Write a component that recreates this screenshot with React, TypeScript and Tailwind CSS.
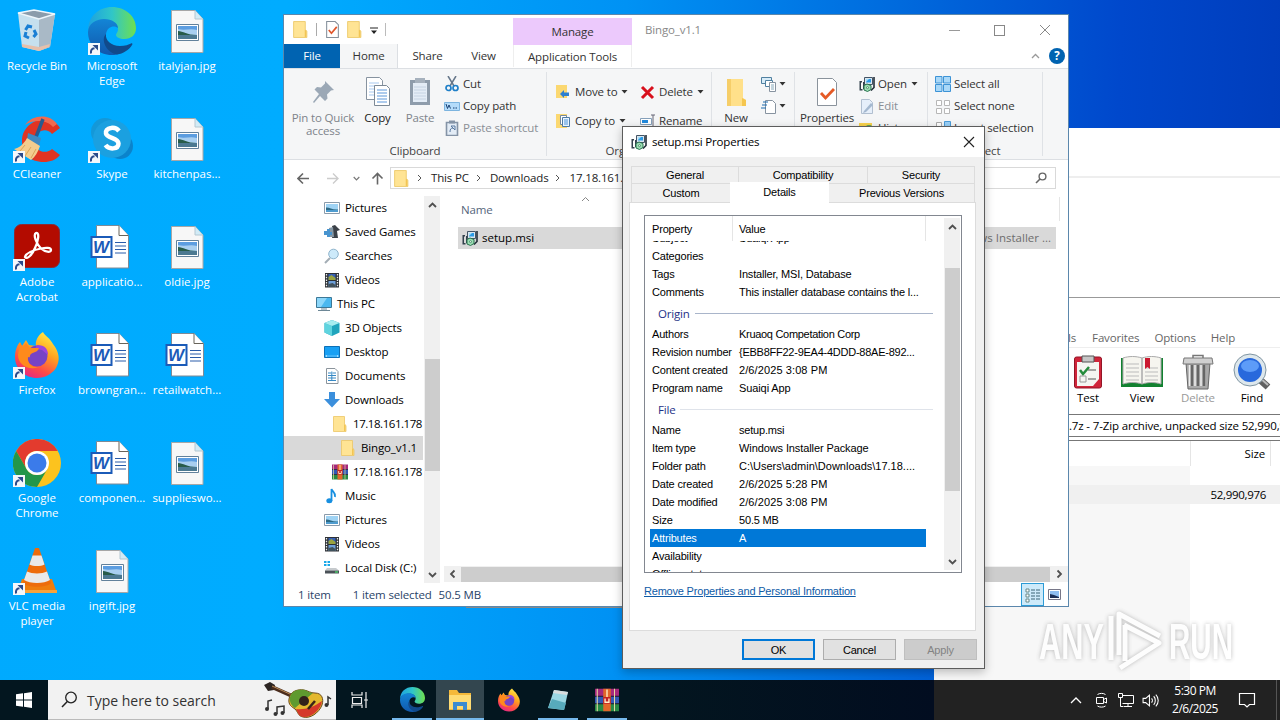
import type { ReactNode } from 'react';
import clsx from 'clsx';

type SvgProps = { size?: number; box?: string; className?: string; children: ReactNode };

function Svg({ size = 16, box = '0 0 16 16', className, children }: SvgProps) {
  return (
    <svg width={size} height={size} viewBox={box} fill="none" className={clsx('shrink-0', className)}>
      {children}
    </svg>
  );
}

/* ---------- shared icons ---------- */

const Folder = ({ size = 16 }: { size?: number }) => (
  <Svg size={size}>
    <path d="M1.500 .5h11v8l1.500 1.500v5.500H1.500z" fill="#ffe494" />
    <path d="M12 8.500h1.500v6.500h-1.500z" fill="#f3c553" />
    <path d="M1.500 .5h11v8l1.500 1v6H1.500z" stroke="#ecc766" strokeWidth=".8" />
  </Svg>
);

const Msi = () => (
  <Svg>
    <path d="M5.500 1.500h8v7h-8z" fill="#d9e6ef" stroke="#456" />
    <path d="M7 3h5v3.500H7z" fill="#2b9be6" />
    <path d="M7 3h3L7 6z" fill="#a5def9" />
    <path d="M15 1v10.500l-3 3" stroke="#222d38" strokeWidth="1.600" />
    <path d="M.5 5h2.500v1.500H2V13h1.500v1.500H.5zM4 6h1.500v7H4z" fill="#33414d" />
    <path d="M5 9.500l3-1.500 4 1.500v4L8.500 15.500 5 14z" fill="#9de0b5" stroke="#27704c" />
    <circle cx="8.500" cy="11.700" r="1" fill="#fff" stroke="#27704c" strokeWidth=".7" />
  </Svg>
);

const Picture = () => (
  <Svg>
    <path d="M.5 2.500h15v11H.5z" fill="#fff" stroke="#8a9bab" />
    <path d="M2 4h12v8H2z" fill="#9fd3f4" />
    <path d="M2 7.500c3-.5 6 2.500 12 2V12H2z" fill="#2c6a86" />
    <path d="M2 10h12v2H2z" fill="#4f9ccf" />
  </Svg>
);

const Film = () => (
  <Svg>
    <path d="M1 1h14v14.500H1z" fill="#2d3136" />
    <path d="M2.500 2v13M13.500 2v13" stroke="#eee" strokeWidth="1.300" strokeDasharray="1.500 1.200" />
    <path d="M4.500 2h7v6h-7z" fill="#3760b5" />
    <path d="M4.500 5l3-2 4 3v2h-7z" fill="#9aa33f" />
    <path d="M4.500 9h7v6h-7z" fill="#6d9fd9" />
    <path d="M4.500 12l4-1 3 2v2h-7z" fill="#40525c" />
  </Svg>
);

const Rar = ({ size = 16 }: { size?: number }) => (
  <Svg size={size}>
    <path d="M0 .5h16v5H0z" fill="#a5287c" />
    <path d="M0 5.500h16v5H0z" fill="#3159b4" />
    <path d="M0 10.500h16v5H0z" fill="#278a45" />
    <path d="M0 5.500h16M0 10.500h16" stroke="#221a33" strokeWidth=".8" />
    <path d="M1.500 .5v15M13 .5v15" stroke="#e5d9a0" strokeWidth=".7" />
    <path d="M5.500 .5h5v15h-5z" fill="#e2672a" />
    <path d="M5.500 6h5v4.500h-5z" fill="#c32124" />
    <path d="M6.700 7v2.500h2.600V7M8 1v5" stroke="#fff0c9" strokeWidth=".9" />
  </Svg>
);

const Monitor = () => (
  <Svg>
    <path d="M.5 1.500h15v10H.5z" fill="#4bb8ef" stroke="#3d7897" />
    <path d="M1 2h10L5 11H1z" fill="#8dd7fa" />
    <path d="M5 13h6M2 14.500h12" stroke="#6d8796" />
  </Svg>
);

const sideIcons: Record<string, ReactNode> = {
  picture: <Picture />,
  film: <Film />,
  pc: <Monitor />,
  folder: <Folder />,
  rar: <Rar />,
  games: (
    <Svg>
      <path d="M8 2l3-1 3 3 2 2-3 1 1 7H8l1-5z" fill="#3b4148" />
      <path d="M5 4l4-1 1 10H5z" fill="#8797a3" />
      <path d="M0 7h3V5h3v3h2v3H6v2H3v-2H0z" fill="#4894cf" />
    </Svg>
  ),
  search: (
    <Svg>
      <path d="M6 10l-5 5" stroke="#a3adb5" strokeWidth="2" />
      <circle cx="9.500" cy="6" r="4.800" fill="#cdeafa" stroke="#8fb4cc" />
    </Svg>
  ),
  cube: (
    <Svg>
      <path d="M8 0l7.500 3v9.500L8 16 .5 12.500V3z" fill="#20a5bd" />
      <path d="M8 6v10L.5 12.500V3z" fill="#5fd4df" />
      <path d="M8 0l7.500 3L8 6 .5 3z" fill="#a7edf0" />
    </Svg>
  ),
  desktop: (
    <Svg>
      <path d="M.5 2.500h15v11H.5z" fill="#18a0f4" stroke="#0c70b7" />
      <path d="M1 12h14" stroke="#64c6ff" />
      <path d="M2 12h1M13 12h1" stroke="#fff" />
    </Svg>
  ),
  doc: (
    <Svg>
      <path d="M2.500.5H11l3 3v12H2.500z" fill="#fff" stroke="#8b949c" />
      <path d="M4 5h3M4 7.500h8M4 10h8M4 12.500h8M8.500 5H12" stroke="#3689c5" />
      <path d="M7.800 3.500v9" stroke="#3689c5" />
    </Svg>
  ),
  down: (
    <Svg>
      <path d="M5 0h6v7h5l-8 8.500L0 7h5z" fill="#3b8fdc" />
    </Svg>
  ),
  music: (
    <Svg>
      <path d="M7.500 13V1c1 3 4.500 3.500 3.500 8" stroke="#178fe0" strokeWidth="1.800" />
      <ellipse cx="5.300" cy="12.800" rx="3" ry="2.500" fill="#178fe0" />
    </Svg>
  ),
  disk: (
    <Svg>
      <path d="M0 1h2.500v2H0zM3.500 1H6v2H3.500zM0 4h2.500v2H0zM3.500 4H6v2H3.500z" fill="#18a7e8" />
      <path d="M3 8h9l3 2.500H1z" fill="#c6cacd" />
      <path d="M1 10.500h14v3H1z" fill="#4b5258" />
      <path d="M11 12h3" stroke="#4be36d" strokeWidth="1.200" />
    </Svg>
  ),
};

/* ---------- desktop icons ---------- */

const Shortcut = () => (
  <Svg size={12} box="0 0 12 12" className="absolute bottom-0 left-0">
    <path d="M0 0h12v12H0z" fill="#f4f7fb" />
    <path d="M3 10.500C2.500 7 4 5.500 6.500 5.200" stroke="#2b4a8b" strokeWidth="2" />
    <path d="M4.500 2H10v5.500z" fill="#2b4a8b" />
  </Svg>
);

const EdgeLogo = ({ size = 48 }: { size?: number }) => (
  <Svg size={size} box="0 0 48 48">
    <defs>
      <linearGradient id="edgeTop" x1="0" y1=".5" x2="1" y2=".5">
        <stop offset="0" stopColor="#1da1e0" />
        <stop offset=".5" stopColor="#30c6c8" />
        <stop offset="1" stopColor="#6fe04e" />
      </linearGradient>
      <linearGradient id="edgeLow" x1="0" y1="0" x2="0" y2="1">
        <stop offset="0" stopColor="#1385d6" />
        <stop offset="1" stopColor="#1158ac" />
      </linearGradient>
    </defs>
    <path d="M0 24C0 9 11 0 24 0s24 9 24 21c0 7-5 11-11.500 11-5 0-8.500-2-8.500-4 0-1.500 2-2.500 2-6 0-5-5-9-12-9C8 13 1 18 0 24z" fill="url(#edgeTop)" />
    <path d="M0 25c0-8 8-13 16-13 8 0 14 4 14 9-3-3-11-2-12 6-1 9 6 20 15 19-3 1.500-6 2-9 2C10 48 0 38 0 25z" fill="url(#edgeLow)" />
    <path d="M18 27c-1 6 5 12 14 12 5 0 9-1.500 11-2.500 1-.5 1.800.3 1.200 1.300C41 43 35 47 29 47.500 19 46 12 33 18 27z" fill="#114a8b" />
  </Svg>
);

const FirefoxLogo = ({ size = 48 }: { size?: number }) => (
  <Svg size={size} box="0 0 48 48">
    <defs>
      <linearGradient id="fox" x1=".8" y1="0" x2=".3" y2="1">
        <stop offset="0" stopColor="#fff04a" />
        <stop offset=".4" stopColor="#ffa51f" />
        <stop offset=".75" stopColor="#ff4a47" />
        <stop offset="1" stopColor="#e42886" />
      </linearGradient>
    </defs>
    <path d="M30 1c2 4 7 6 10 12 7 9 7 17 3 24-4 6-11 10-19 10C12 47 2 38 2 26c0-6 2-12 5-15l2 4 4-6 3 5 7 1c-1-5 2-11 7-14z" fill="url(#fox)" />
    <circle cx="24" cy="25" r="10.500" fill="#7743c5" />
    <path d="M24 14c8 0 11 4 11 10l-6-5-7-1z" fill="#9c45dc" />
    <path d="M7 12l3 4 3-4 4 5 9 0c-1 4-5 4-8 6-2 2 0 4-3 3-1 7 5 11 11 10C16 40 5 34 5 24z" fill="#ff8a1c" />
  </Svg>
);

const ImageFile = () => (
  <Svg size={48} box="0 0 48 48">
    <path d="M8.500 3.500H32l8 8.500v33.500H8.500z" fill="#f7f7f7" stroke="#a7a7a7" />
    <path d="M32 3.500V12h8" fill="#d2ebf6" stroke="#b4c7d1" />
    <path d="M13.500 17.500h22v16h-22z" fill="#fff" stroke="#62819b" />
    <path d="M15 19h19v13H15z" fill="#a9cff0" />
    <path d="M15 19h19v4c-7-2-12 1-19-1z" fill="#5c9de0" />
    <path d="M15 24c5 0 9 4 19 4v1H15z" fill="#285c4a" />
    <path d="M15 28h19v4H15z" fill="#4c7991" />
  </Svg>
);

const WordFile = () => (
  <Svg size={48} box="0 0 48 48">
    <path d="M8.500 2.500H31l9.500 10v32.500h-32z" fill="#fff" stroke="#7e8a96" />
    <path d="M31 2.500V12.500h9.500" fill="#fff" stroke="#68645a" />
    <path d="M27 19.500h11M27 23h11M27 26.500h11M27 30h11" stroke="#2a5caa" />
    <path d="M3.500 14h20v20h-20z" fill="#fff" stroke="#1b5bb8" strokeWidth="2" />
    <text x="5" y="30" fill="#1b5bb8" fontFamily="'Liberation Sans', sans-serif" fontSize="17" fontWeight="700" fontStyle="italic">
      W
    </text>
  </Svg>
);

const deskIcons: Record<string, ReactNode> = {
  image: <ImageFile />,
  word: <WordFile />,
  edge: <EdgeLogo />,
  firefox: <FirefoxLogo />,
  bin: (
    <Svg size={48} box="0 0 48 48">
      <path d="M5 6l16-3 21 4-5 33-11 4-17-4z" fill="#dbe5ec" fillOpacity=".9" />
      <path d="M26 12l16-5-5 33-11 4z" fill="#a9b9c6" />
      <path d="M5 6l16-3 21 4-16 5z" fill="#8b9cab" stroke="#eef6fb" strokeWidth="1.500" />
      <path d="M9 37l17 3 11-3-1 3-10 4-17-4z" fill="#e6c0ab" />
      <path d="M12.500 23l2.500-4 4 1M21 23l2 4-2.500 3M16 31l-4-2 1-4" stroke="#1a7fd4" strokeWidth="3" />
    </Svg>
  ),
  ccleaner: (
    <Svg size={48} box="0 0 48 48">
      <path d="M47 13l-8 6c-5-7-17-4-17 7 0 12 12 13 17 8l8 6c-4 5-10 7-16 7C16 47 9 38 9 26 9 6 36-4 47 13z" fill="#e03423" />
      <path d="M12 10c8-11 25-11 32-1l-4 3C33 4 20 5 12 10z" fill="#f06a50" />
      <path d="M30 4L23 22" stroke="#285b8f" strokeWidth="3.500" />
      <path d="M15 18l13 5-2 8-12-6z" fill="#3f8ac2" />
      <path d="M14 23l13 8c-2 6-5 11-9 14L1 34c5-1 10-5 13-11z" fill="#f3cc8e" />
      <path d="M12 30l-5 6M18 32l-6 9M23 34l-5 9" stroke="#d9a45b" />
    </Svg>
  ),
  skype: (
    <Svg size={48} box="0 0 48 48">
      <circle cx="17" cy="17" r="14" fill="#1498d8" />
      <circle cx="32" cy="31" r="13" fill="#0b83cb" />
      <circle cx="24" cy="24" r="19" fill="#1ba0e0" />
      <path d="M31 16c-2-2.500-5-3.500-8-3-4 .5-5.500 3-5 5.500 1 5 12 4 12.500 10 0 6-9.500 6.500-13 1.500" stroke="#fff" strokeWidth="4.500" />
    </Svg>
  ),
  acrobat: (
    <Svg size={48} box="0 0 48 48">
      <rect x="1.500" y="1.500" width="45" height="43" rx="7" fill="#b30b00" stroke="#8b2a35" />
      <path d="M12 34c1-4 9-7 16-8.500 5-1 10-1 10 1.500 0 3-6 2-10-1.500-5-5-8-14-5-15.500 4-1 2 9-1 15-3 7-8 12-10 9z" stroke="#fff" strokeWidth="2.300" />
    </Svg>
  ),
  chrome: (
    <Svg size={48} box="0 0 48 48">
      <circle cx="24" cy="24" r="24" fill="#fcc31e" />
      <path d="M3.200 12a24 24 0 0 1 41.600 0H24a12 12 0 0 0-10.400 18z" fill="#e33b2e" />
      <path d="M3.200 12l10.400 18A12 12 0 0 0 34.400 30L24 48A24 24 0 0 1 3.200 12z" fill="#23964a" />
      <circle cx="24" cy="24" r="12" fill="#fff" />
      <circle cx="24" cy="24" r="9.500" fill="#3b7bea" />
    </Svg>
  ),
  vlc: (
    <Svg size={48} box="0 0 48 48">
      <path d="M9 32h30l5 14H4z" fill="#ef7d0d" />
      <path d="M5 43h39v3H4z" fill="#f9a33b" />
      <path d="M22 1h4l12 35c-4 5-24 5-28 0z" fill="#ed6c0b" />
      <path d="M19.500 8.500h9l3 9c-4 2-11 2-15 0zM14 24.500c5 2.500 15 2.500 20 0l3 8.500c-6 4-20 4-26 0z" fill="#e9e9e9" />
    </Svg>
  ),
};

const desktopItems = [
  { label: ['Recycle Bin'], icon: 'bin' },
  { label: ['CCleaner'], icon: 'ccleaner', shortcut: true },
  { label: ['Adobe', 'Acrobat'], icon: 'acrobat', shortcut: true },
  { label: ['Firefox'], icon: 'firefox', shortcut: true },
  { label: ['Google', 'Chrome'], icon: 'chrome', shortcut: true },
  { label: ['VLC media', 'player'], icon: 'vlc', shortcut: true },
  { label: ['Microsoft', 'Edge'], icon: 'edge', shortcut: true },
  { label: ['Skype'], icon: 'skype', shortcut: true },
  { label: ['applicatio...'], icon: 'word' },
  { label: ['browngran...'], icon: 'word' },
  { label: ['componen...'], icon: 'word' },
  { label: ['ingift.jpg'], icon: 'image' },
  { label: ['italyjan.jpg'], icon: 'image' },
  { label: ['kitchenpas...'], icon: 'image' },
  { label: ['oldie.jpg'], icon: 'image' },
  { label: ['retailwatch...'], icon: 'word' },
  { label: ['supplieswo...'], icon: 'image' },
];

function Desktop() {
  return (
    <div className="absolute top-[7px] left-0 grid w-[225px] grid-flow-col grid-cols-3 grid-rows-[repeat(6,108px)]">
      {desktopItems.map((item) => (
        <div key={item.label[0]} className="flex flex-col items-center pr-px">
          <div className="relative size-12">
            {deskIcons[item.icon]}
            {item.shortcut && <Shortcut />}
          </div>
          <div className="mt-[3px] text-center leading-[15px] tracking-[0px] whitespace-nowrap text-white">
            {item.label.map((line) => (
              <div key={line}>{line}</div>
            ))}
          </div>
        </div>
      ))}
    </div>
  );
}

/* ---------- archive window ---------- */

const archiveTools = [
  {
    label: 'Test',
    width: '-ml-[7px] w-[54px] text-black',
    icon: (
      <Svg size={36} box="0 0 36 36">
        <rect x="4.500" y="3" width="27" height="31" rx="2" fill="#d0253a" stroke="#931526" />
        <path d="M7 8h22v17l-6 7H7z" fill="#f5f5f2" />
        <path d="M12 2h12v6H12z" fill="#c6c6c6" stroke="#555" />
        <path d="M10 16l3 4 6-7" stroke="#258c3c" strokeWidth="2.500" />
        <path d="M18 16h8M18 25h8" stroke="#555" />
        <path d="M10 22h6v6h-6z" stroke="#999" />
      </Svg>
    ),
  },
  {
    label: 'View',
    width: 'w-[54px] text-black',
    icon: (
      <Svg size={44} box="0 0 44 36">
        <path d="M1 4h42v29H1z" fill="#128130" />
        <path d="M3 4c6-2 13-2 19 0v26c-6-2-13-2-19 0zM22 4c6-2 13-2 19 0v26c-6-2-13-2-19 0z" fill="#f6f5ef" stroke="#aaa" />
        <path d="M6 10h13M6 14h13M6 18h13M6 22h13M6 26h13M25 14h13M25 18h13M25 22h13M25 26h13" stroke="#bbb" />
        <path d="M25 4h5v11l-2.500-2-2.500 2z" fill="#cb1930" />
      </Svg>
    ),
  },
  {
    label: 'Delete',
    width: 'w-[58px] text-[#999]',
    icon: (
      <Svg size={36} box="0 0 36 36">
        <path d="M6 9h24l-2 26H8z" fill="#a9a9a9" stroke="#666" />
        <path d="M12 11v21M18 11v21M24 11v21" stroke="#666" strokeWidth="2.300" />
        <path d="M9.500 11v21M15 11v21M21 11v21" stroke="#eee" strokeWidth="1.500" />
        <path d="M4 4h28l1 6H3z" fill="#d0d0d0" stroke="#777" />
        <path d="M13 4V1.500h10V4" stroke="#777" strokeWidth="1.500" />
      </Svg>
    ),
  },
  {
    label: 'Find',
    width: 'w-[50px] text-black',
    icon: (
      <Svg size={38} box="0 0 38 38">
        <path d="M25 25l10 9" stroke="#616161" strokeWidth="7" />
        <path d="M26 24l9 8" stroke="#bcbcbc" strokeWidth="2" />
        <circle cx="17" cy="17" r="14" fill="#2869dc" stroke="#dde7ec" strokeWidth="4" />
        <circle cx="17" cy="17" r="16" stroke="#8095a2" />
        <ellipse cx="17" cy="13" rx="9" ry="6" fill="#5d9cf8" />
      </Svg>
    ),
  },
];

function ArchiveWindow() {
  return (
    <section className="absolute top-[297px] left-[934px] flex h-[383px] w-[346px] flex-col overflow-hidden border-t border-[#999] bg-white pl-[134px]">
      <nav className="mt-[32px] flex h-[17px] gap-[15px] leading-[16px] text-[#666]">
        <span className="pr-px">ls</span>
        <span>Favorites</span>
        <span>Options</span>
        <span>Help</span>
      </nav>
      <div className="flex h-[67px] border-t border-[#eee] pt-[6px]">
        {archiveTools.map((tool) => (
          <div key={tool.label} className={clsx('flex shrink-0 flex-col items-center', tool.width)}>
            <div className="flex h-9 w-[44px] items-center justify-center">{tool.icon}</div>
            <span className="leading-[16px]">{tool.label}</span>
          </div>
        ))}
      </div>
      <div className="h-[23px] border-y border-[#777] pl-px leading-[22px] whitespace-nowrap text-black">
        .7z - 7-Zip archive, unpacked size 52,990,976 bytes
      </div>
      <div className="mt-[3px] flex h-[26px] shrink-0 border-t border-[#777] leading-[26px]">
        <div className="w-[123px] border-r border-[#e5e5e5]" />
        <div className="w-[80px] border-r border-[#e5e5e5] pr-[5px] text-right text-black">Size</div>
      </div>
      <div className="-ml-[134px] flex flex-1 flex-col bg-white bg-[linear-gradient(90deg,#f7f7f7_256px,#fff_256px)]">
        <div className="mt-[19px] flex h-[19px] justify-end bg-[#f0f0f0] pr-[14px] leading-[20px] tracking-[-0.3px] text-black">52,990,976</div>
      </div>
    </section>
  );
}

/* ---------- explorer window ---------- */

const Caret = () => (
  <svg width="7" height="4" viewBox="0 0 7 4" className="ml-px shrink-0">
    <path d="M.5 0h6L3.500 3.500z" fill="#333" />
  </svg>
);

function SmallButton({ icon, label, caret, muted }: { icon: ReactNode; label: string; caret?: boolean; muted?: boolean }) {
  return (
    <div className={clsx('flex h-[22px] items-center gap-[3px] whitespace-nowrap', muted ? 'text-[#8a8f96]' : 'text-[#333]')}>
      {icon}
      <span>{label}</span>
      {caret && <Caret />}
    </div>
  );
}

function RibbonGroup({ className, label, children }: { className: string; label: string; children: ReactNode }) {
  return (
    <div className={clsx('my-[3px] flex shrink-0 flex-col border-r border-[#dfe2e6]', className)}>
      <div className="flex h-[71px] shrink-0 pt-px">{children}</div>
      <div className="text-center leading-[15px] text-[#444]">{label}</div>
    </div>
  );
}

function Ribbon() {
  return (
    <div className="flex h-[92px] shrink-0 border-y border-[#dcdfe3] bg-[#f5f6f7]">
      <RibbonGroup className="w-[263px]" label="Clipboard">
        <div className="ml-[6px] flex w-[66px] flex-col items-center text-center leading-[13px] text-[#7e848b]">
          <Svg size={32} box="0 0 32 32" className="mt-[3px]">
            <path d="M18 5l9 9-3 .5-4 4 .5 4-2.500 2.500L13 20l-6 7-1-1 6-8-4.500-4.500 2.500-2.500 4 .5 4-4z" fill="#9ba8b6" />
          </Svg>
          <span className="mt-[3px] whitespace-nowrap">
            Pin to Quick
            <br />
            access
          </span>
        </div>
        <div className="flex w-[43px] flex-col items-center text-[#222]">
          <Svg size={32} box="0 0 32 32" className="mt-[3px]">
            <path d="M4.500 1.500h13l3 3v19h-16z" fill="#fff" stroke="#8793a0" />
            <path d="M7 7h10M7 10h10M7 13h10M7 16h10M7 19h10" stroke="#a7c8ef" />
            <path d="M12.500 9.500h12l3 3v17h-15z" fill="#fff" stroke="#7c8996" />
            <path d="M15 14h10M15 17h10M15 20h10M15 23h10M15 26h10" stroke="#5c97da" />
          </Svg>
          <span className="mt-px leading-[17px]">Copy</span>
        </div>
        <div className="flex w-[42px] flex-col items-center text-[#7e848b]">
          <Svg size={32} box="0 0 32 32" className="mt-[3px]">
            <path d="M6 4h20v25H6z" fill="#8e9cab" />
            <path d="M9 7h14v19H9z" fill="#e3ecf6" />
            <path d="M11 2h10v5H11z" fill="#a6b1bd" />
            <path d="M10 11h12M10 14h12M10 17h12M10 20h12M10 23h12" stroke="#c4d2e2" />
          </Svg>
          <span className="mt-px leading-[17px]">Paste</span>
        </div>
        <div className="ml-[3px] flex flex-col">
          <SmallButton
            label="Cut"
            icon={
              <Svg>
                <path d="M4 0l6 10M12 0L6 10" stroke="#66778a" strokeWidth="1.500" />
                <circle cx="4.500" cy="12" r="2.500" stroke="#1f7fc8" strokeWidth="1.700" />
                <circle cx="11.500" cy="12" r="2.500" stroke="#1f7fc8" strokeWidth="1.700" />
              </Svg>
            }
          />
          <SmallButton
            label="Copy path"
            icon={
              <Svg>
                <path d="M.5 4.500h15v8H.5z" fill="#b5dcfa" stroke="#7cb4df" />
                <path d="M2 6l1.500 4.500L5 7l1.500 3.500M9 10h1.500M11.500 10H13" stroke="#173f73" />
              </Svg>
            }
          />
          <SmallButton
            muted
            label="Paste shortcut"
            icon={
              <Svg>
                <path d="M2.500 2.500h11v13h-11z" fill="#e3ecf6" stroke="#8493a6" strokeWidth="1.600" />
                <path d="M5 .5h6v3H5z" fill="#8493a6" />
                <path d="M6 12c0-3 1-4 3-4M7 6h4v4z" stroke="#5878a0" />
              </Svg>
            }
          />
        </div>
      </RibbonGroup>

      <RibbonGroup className="w-[165px]" label="Organize">
        <div className="ml-[9px] flex w-[84px] flex-col gap-[7px] pt-[8px]">
          <SmallButton
            caret
            label="Move to"
            icon={
              <Svg>
                <path d="M0 1h11v13H0z" fill="#fbd871" />
                <path d="M4 10l4-4v2.500h5V12H8v2z" fill="#2c7fd0" />
              </Svg>
            }
          />
          <SmallButton
            caret
            label="Copy to"
            icon={
              <Svg>
                <path d="M0 1h11v14H0z" fill="#fbd871" />
                <path d="M4.500 2.500h6v9h-6z" fill="#fff" stroke="#74889b" />
                <path d="M6.500 4.500h7v9h-7z" fill="#e8f3ff" stroke="#4d7ba6" />
                <path d="M8 7h4M8 9h4M8 11h4" stroke="#4d94d9" />
              </Svg>
            }
          />
        </div>
        <div className="flex flex-col gap-[7px] pt-[8px]">
          <SmallButton
            caret
            label="Delete"
            icon={
              <Svg>
                <path d="M2 3l11 11M13 3L2 14" stroke="#d8101c" strokeWidth="3" />
              </Svg>
            }
          />
          <SmallButton
            label="Rename"
            icon={
              <Svg>
                <path d="M.5 5.500h11v6H.5z" fill="#fff" stroke="#85a0ba" />
                <path d="M2 7h6v3H2z" fill="#2289dc" />
                <path d="M11 2h4M13 2v12M11 14h4" stroke="#667" />
              </Svg>
            }
          />
        </div>
      </RibbonGroup>

      <RibbonGroup className="w-[83px]" label="New">
        <div className="ml-[3px] flex w-[42px] flex-col items-center leading-[15px] text-[#333]">
          <div className="mt-[4px]">
            <Svg size={32} box="0 0 32 32">
              <path d="M7 2h16v19l3 2v6H7z" fill="#ffe08a" />
              <path d="M7 2h4v27H7z" fill="#f6ce69" />
              <path d="M22 21l4 2v6h-4z" fill="#f5c64f" />
            </Svg>
          </div>
          <span className="mt-px">New</span>
        </div>
        <div className="ml-[4px] flex flex-col">
          <div className="flex h-[22px] items-center gap-px">
            <Svg>
              <path d="M.5 1.500h10v6H.5z" fill="#d8ecf8" stroke="#5080a0" />
              <path d="M4.500 4.500h7v6h-7z" fill="#fff" stroke="#5080a0" />
              <path d="M8.500 6.500h6v9h-6z" fill="#fff" stroke="#8793a0" />
              <path d="M10 9h3M10 11h3M10 13h3" stroke="#8ab" />
            </Svg>
            <Caret />
          </div>
          <div className="flex h-[22px] items-center gap-px">
            <Svg>
              <path d="M4.500 2.500h7l3 3v10h-10z" fill="#fff" stroke="#8793a0" />
              <path d="M2 4h5M1 7h5M0 10h5" stroke="#1f6cb0" strokeWidth="1.200" />
            </Svg>
            <Caret />
          </div>
        </div>
      </RibbonGroup>

      <RibbonGroup className="w-[133px]" label="Open">
        <div className="ml-[4px] flex w-[56px] flex-col items-center text-[#333]">
          <Svg size={32} box="0 0 32 32" className="mt-[3px]">
            <path d="M6.500 2.500h15l4 4v23h-19z" fill="#fff" stroke="#8a939c" />
            <path d="M10 17l4.500 5 8.500-9" stroke="#e55a26" strokeWidth="2.800" />
          </Svg>
          <span className="mt-px leading-[17px]">Properties</span>
        </div>
        <div className="ml-[4px] flex flex-col">
          <SmallButton caret label="Open" icon={<Msi />} />
          <SmallButton
            muted
            label="Edit"
            icon={
              <Svg>
                <path d="M2.500 1.500h8l3 3v11h-11z" fill="#e6effa" stroke="#b1bfd0" />
                <path d="M5 13l7-8 2 2-7 7-3 1z" fill="#a5b9d0" />
              </Svg>
            }
          />
          <SmallButton
            label="History"
            icon={
              <Svg>
                <path d="M0 3h13v12H0z" fill="#f8d24c" />
                <circle cx="10" cy="10" r="5" fill="#53a95a" />
              </Svg>
            }
          />
        </div>
      </RibbonGroup>

      <RibbonGroup className="w-[115px]" label="Select">
        <div className="ml-[7px] flex flex-col">
          <SmallButton
            label="Select all"
            icon={
              <Svg>
                <path d="M.5.5h6.500v6.500h-6.500zM8.500.5h7v6.500h-7zM.5 8.500h6.500v7h-6.500zM8.500 8.500h7v7h-7z" fill="#a9d8f8" stroke="#3c93d6" />
              </Svg>
            }
          />
          <SmallButton
            label="Select none"
            icon={
              <Svg>
                <path d="M1.500 2.500h5v5h-5zM9.500 2.500h5v5h-5zM1.500 10.500h5v5h-5zM9.500 10.500h5v5h-5z" fill="#fff" stroke="#b7b7b7" />
              </Svg>
            }
          />
          <SmallButton
            label="Invert selection"
            icon={
              <Svg>
                <path d="M1.500 2.500h5v5h-5z" fill="#fff" stroke="#aaa" />
                <path d="M9.500 1.500h6v6h-6zM1.500 9.500h6v6h-6z" fill="#99d0f8" stroke="#4a9bd8" />
              </Svg>
            }
          />
        </div>
      </RibbonGroup>
    </div>
  );
}

const tree = [
  { label: 'Pictures', icon: 'picture', pad: 'pl-[40px]' },
  { label: 'Saved Games', icon: 'games', pad: 'pl-[40px]' },
  { label: 'Searches', icon: 'search', pad: 'pl-[40px]' },
  { label: 'Videos', icon: 'film', pad: 'pl-[40px]' },
  { label: 'This PC', icon: 'pc', pad: 'pl-[32px]' },
  { label: '3D Objects', icon: 'cube', pad: 'pl-[40px]' },
  { label: 'Desktop', icon: 'desktop', pad: 'pl-[40px]' },
  { label: 'Documents', icon: 'doc', pad: 'pl-[40px]' },
  { label: 'Downloads', icon: 'down', pad: 'pl-[40px]' },
  { label: '17.18.161.178', icon: 'folder', pad: 'pl-[48px] tracking-[-0.45px]' },
  { label: 'Bingo_v1.1', icon: 'folder', pad: 'pl-[56px]', active: true },
  { label: '17.18.161.178', icon: 'rar', pad: 'pl-[48px] tracking-[-0.45px]' },
  { label: 'Music', icon: 'music', pad: 'pl-[40px]' },
  { label: 'Pictures', icon: 'picture', pad: 'pl-[40px]' },
  { label: 'Videos', icon: 'film', pad: 'pl-[40px]' },
  { label: 'Local Disk (C:)', icon: 'disk', pad: 'pl-[40px]' },
];

type Direction = 'up' | 'down' | 'left' | 'right';

const rotation: Record<Direction, string> = {
  up: 'rotate-0',
  down: 'rotate-180',
  left: '-rotate-90',
  right: 'rotate-90',
};

const Chevron = ({ dir }: { dir: Direction }) => (
  <svg width="9" height="6" viewBox="0 0 9 6" fill="none" className={clsx('shrink-0', rotation[dir])}>
    <path d="M1 5l3.500-3.500L8 5" stroke="#505050" strokeWidth="1.800" />
  </svg>
);

function ExplorerWindow() {
  return (
    <section className="absolute top-[14px] left-[283px] flex h-[593px] w-[786px] flex-col overflow-hidden border border-[#5b87ac] bg-white">
      {/* Title bar and tabs */}
      <header className="flex h-[53px] shrink-0">
        <div className="flex w-[229px] shrink-0 flex-col">
          <div className="flex h-[30px] items-center pl-[8px]">
            <Folder size={17} />
            <div className="mx-[7px] h-[13px] w-px bg-[#aaa]" />
            <Svg size={17}>
              <path d="M2.500.5h8l3 3v12h-11z" fill="#fff" stroke="#85909b" />
              <path d="M4.500 8.500l2.500 3 5-6" stroke="#e0562b" strokeWidth="1.600" />
            </Svg>
            <div className="ml-[5px]">
              <Folder size={17} />
            </div>
            <svg width="8" height="8" viewBox="0 0 8 8" className="mt-[3px] ml-[7px]">
              <path d="M0 .5h8v1H0zM1 3.500h6L4 7z" fill="#222" />
            </svg>
            <div className="ml-[7px] h-[13px] w-px bg-[#bbb]" />
          </div>
          <div className="flex h-[24px] leading-[24px] text-[#333]">
            <span className="w-[56px] bg-[#0063b1] text-center text-white">File</span>
            <span className="relative z-10 w-[58px] border-r border-[#dcdfe3] bg-[#f5f6f7] text-center">Home</span>
            <span className="w-[59px] text-center">Share</span>
            <span className="w-[53px] text-center">View</span>
          </div>
        </div>
        <div className="mt-[3px] flex w-[119px] shrink-0 flex-col text-center text-[#333]">
          <span className="h-[27px] bg-[#ecc9fc] leading-[28px]">Manage</span>
          <span className="h-[22px] border-x border-[#eee] leading-[23px]">Application Tools</span>
        </div>
        <div className="flex flex-1 flex-col">
          <div className="flex h-[30px] items-center justify-between pr-[17px] pl-[13px] text-[#888]">
            <span>Bingo_v1.1</span>
            <div className="flex items-center gap-[34px]">
              <div className="h-px w-[11px] bg-[#999]" />
              <div className="size-[11px] border border-[#888]" />
              <Svg size={12} box="0 0 12 12">
                <path d="M1 1l10 10M11 1L1 11" stroke="#888" />
              </Svg>
            </div>
          </div>
          <div className="flex h-[22px] items-center justify-end gap-[9px] pr-[3px]">
            <svg width="9" height="6" viewBox="0 0 9 6" fill="none">
              <path d="M1 5l3.500-3.500L8 5" stroke="#999" strokeWidth="1.300" />
            </svg>
            <span className="size-4 rounded-full bg-[#0063b1] text-center leading-4 font-bold text-white">?</span>
          </div>
        </div>
      </header>
      <Ribbon />

      {/* Address row */}
      <div className="flex h-[36px] shrink-0 items-center pl-[13px] text-[#222]">
        <Svg size={13} box="0 0 13 12">
          <path d="M6 1L1 6l5 5M1 6h11" stroke="#666" strokeWidth="1.600" />
        </Svg>
        <Svg size={13} box="0 0 13 12" className="ml-[16px]">
          <path d="M7 1l5 5-5 5M12 6H1" stroke="#ccc" strokeWidth="1.400" />
        </Svg>
        <Svg size={7} box="0 0 7 5" className="ml-[14px]">
          <path d="M.7 1l2.800 2.800L6.300 1" stroke="#777" strokeWidth="1.200" />
        </Svg>
        <Svg size={13} box="0 0 13 12" className="ml-[11px]">
          <path d="M1.500 6l5-5 5 5M6.500 1v11" stroke="#666" strokeWidth="1.600" />
        </Svg>
        <div className="ml-[6px] flex h-[22px] w-[500px] items-center border border-[#d9d9d9] pl-[2px] whitespace-nowrap">
          <Folder size={17} />
          {['This PC', 'Downloads', '17.18.161.178'].map((crumb) => (
            <span key={crumb} className="flex items-center">
              <svg width="5" height="8" viewBox="0 0 5 8" fill="none" className="mr-[9px] ml-[7px]">
                <path d="M1 1l3 3-3 3" stroke="#555" />
              </svg>
              <span>{crumb}</span>
            </span>
          ))}
        </div>
        <div className="mr-[12px] ml-[12px] flex h-[22px] flex-1 items-center justify-end border border-[#d9d9d9] pr-[8px]">
          <Svg size={12} box="0 0 12 12">
            <circle cx="7.500" cy="4.500" r="3.400" stroke="#666" strokeWidth="1.400" />
            <path d="M5 7L1 11" stroke="#666" strokeWidth="1.600" />
          </Svg>
        </div>
      </div>

      <div className="flex h-[387px] shrink-0">
        {/* Folder tree */}
        <ul className="w-[139px] overflow-hidden text-black">
          {tree.map((node, i) => (
            <li
              key={i}
              className={clsx('flex h-[24px] items-center gap-[5px] whitespace-nowrap', node.pad, node.active && 'bg-[#d9d9d9]')}
            >
              {sideIcons[node.icon]}
              <span>{node.label}</span>
            </li>
          ))}
        </ul>
        <div className="ml-px flex w-[16px] flex-col items-center bg-[#f0f0f0]">
          <div className="flex h-[17px] items-center">
            <Chevron dir="up" />
          </div>
          <div className="mt-[146px] h-[112px] w-[15px] bg-[#cdcdcd]" />
          <div className="mt-auto flex h-[17px] items-center">
            <Chevron dir="down" />
          </div>
        </div>

        {/* File list */}
        <div className="flex flex-1 flex-col">
          <div className="ml-[18px] flex h-[31px] justify-between pl-[3px] text-[#54657b]">
            <span className="pt-[5px]">Name</span>
            <svg width="9" height="6" viewBox="0 0 9 6" fill="none" className="mr-auto ml-[88px]">
              <path d="M1 5l3.500-3.500L8 5" stroke="#888" />
            </svg>
            <div className="mt-px mr-[8px] h-[24px] w-px bg-[#e5e5e5]" />
          </div>
          <div className="mr-[12px] ml-[18px] flex h-[22px] items-center gap-[4px] bg-[#d9d9d9] pr-[5px] pl-[4px] text-black">
            <Msi />
            <span className="tracking-[0px]">setup.msi</span>
            <span className="ml-auto tracking-[0px] text-[#6d6d6d]">Windows Installer ...</span>
          </div>
          <div className="mt-auto mb-[1px] ml-[4px] flex h-[16px] items-center bg-[#f0f0f0]">
            <div className="flex w-[17px] justify-center">
              <Chevron dir="left" />
            </div>
            <div className="h-[15px] flex-1 bg-[#cdcdcd]" />
            <div className="flex w-[18px] justify-center">
              <Chevron dir="right" />
            </div>
          </div>
        </div>
      </div>

      <footer className="flex h-[23px] shrink-0 items-center pr-[4px] pl-[14px] text-[#2a4468]">
        <span>1 item</span>
        <span className="ml-[22px]">1 item selected</span>
        <span className="ml-[7px]">50.5 MB</span>
        <div className="ml-auto flex h-[23px] w-[23px] items-center justify-center border border-[#2c9bd6] bg-[#cdeafa]">
          <Svg>
            <path d="M1 2h3v3H1zM1 7h3v3H1zM1 12h3v3H1z" stroke="#688" fill="#fff" />
            <path d="M6 3h4M11 3h4M6 6h4M11 6h4M6 9h4M11 9h4M6 12h4M11 12h4" stroke="#3d6476" />
          </Svg>
        </div>
        <Svg size={16} className="mr-px ml-[3px]">
          <path d="M1.500 2.500h12v10h-12z" fill="#fff" stroke="#778" />
          <path d="M3 4h9v7H3z" fill="#8fbef0" />
          <path d="M3 7l4 1 5 2v1H3z" fill="#1d2f55" />
        </Svg>
      </footer>
    </section>
  );
}

/* ---------- properties dialog ---------- */

const details = [
  { name: 'Subject', value: 'Suaiqi App' },
  { name: 'Categories', value: '' },
  { name: 'Tags', value: 'Installer, MSI, Database' },
  { name: 'Comments', value: 'This installer database contains the l...' },
  { heading: 'Origin', line: 'bg-[#a9b5ca]' },
  { name: 'Authors', value: 'Kruaoq Competation Corp', fit: 'tracking-[-0.3px]' },
  { name: 'Revision number', value: '{EBB8FF22-9EA4-4DDD-88AE-892...', fit: 'tracking-[-0.25px]' },
  { name: 'Content created', value: '2/6/2025 3:08 PM', fit: 'tracking-[0.1px]' },
  { name: 'Program name', value: 'Suaiqi App', fit: 'tracking-[-0.1px]' },
  { heading: 'File', line: 'bg-[#dfe3ea]' },
  { name: 'Name', value: 'setup.msi', fit: 'tracking-[-0.2px]' },
  { name: 'Item type', value: 'Windows Installer Package', fit: 'tracking-[-0.1px]' },
  { name: 'Folder path', value: 'C:\\Users\\admin\\Downloads\\17.18....', fit: 'tracking-[0px]' },
  { name: 'Date created', value: '2/6/2025 5:28 PM', fit: 'tracking-[0.1px]' },
  { name: 'Date modified', value: '2/6/2025 3:08 PM', fit: 'tracking-[0.1px]' },
  { name: 'Size', value: '50.5 MB' },
  { name: 'Attributes', value: 'A', active: true },
  { name: 'Availability', value: '' },
  { name: 'Offline status', value: '' },
];

function PropertiesDialog() {
  return (
    <section className="absolute top-[126px] left-[622px] flex h-[543px] w-[363px] flex-col border border-[#5c5c5c] bg-[#f0f0f0] font-['Liberation_Sans',sans-serif] text-[11px] tracking-[-0.18px] text-black shadow-[0_3px_9px_rgba(0,0,0,0.25)]">
      <header className="flex h-[30px] shrink-0 items-center bg-white pr-[9px] pl-[8px] font-['Open_Sans','Noto_Sans',sans-serif] text-[11.5px]">
        <Msi />
        <span className="ml-[5px]">setup.msi Properties</span>
        <Svg size={12} box="0 0 12 12" className="ml-auto">
          <path d="M1 1l10 10M11 1L1 11" stroke="#222" strokeWidth="1.100" />
        </Svg>
      </header>

      <div className="mr-[9px] ml-[7px] mt-[9px] flex flex-col">
        <div className="flex h-[18px] pl-px text-center leading-[17px]">
          <span className="w-[108px] border border-[#dcdcdc]">General</span>
          <span className="w-[129px] border-y border-r border-[#dcdcdc]">Compatibility</span>
          <span className="flex-1 border-y border-r border-[#dcdcdc]">Security</span>
        </div>
        <div className="flex h-[18px] pl-px text-center leading-[19px]">
          <span className="w-[99px] border-l border-[#dcdcdc]">Custom</span>
          <span className="relative z-10 -mt-[2px] h-[21px] w-[99px] bg-white leading-[20px]">Details</span>
          <span className="flex-1 border-r border-[#dcdcdc]">Previous Versions</span>
        </div>
      </div>

      <div className="mr-[8px] ml-[6px] flex h-[429px] shrink-0 flex-col border border-[#dcdcdc] bg-white px-[14px] pt-[12px]">
        <div className="flex h-[358px] w-[318px] border border-[#828790]">
          <div className="flex flex-1 flex-col">
            <div className="flex h-[25px] shrink-0 leading-[26px]">
              <span className="w-[88px] border-r border-[#e5e5e5] pl-[7px]">Property</span>
              <span className="w-[193px] border-r border-[#e5e5e5] pl-[6px]">Value</span>
            </div>
            <div className="h-[331px] overflow-hidden">
              <div className="-mt-[12px] pl-[5px]">
                {details.map((row, i) =>
                  row.heading ? (
                    <div key={i} className="flex h-[24px] items-center gap-[5px] pt-px pl-[8px] font-['Open_Sans',sans-serif] text-[11.5px] text-[#1e3287]">
                      {row.heading}
                      <div className={clsx('mr-[11px] h-px flex-1', row.line)} />
                    </div>
                  ) : (
                    <div
                      key={i}
                      className={clsx('flex h-[18px] w-[276px] items-center pl-[2px] whitespace-nowrap', row.active && 'bg-[#0078d7] text-white')}
                    >
                      <span className="w-[87px]">{row.name}</span>
                      <span className={row.fit}>{row.value}</span>
                    </div>
                  ),
                )}
              </div>
            </div>
          </div>
          <div className="my-[2px] mr-px flex w-[16px] flex-col items-center bg-[#f0f0f0]">
            <div className="flex h-[17px] items-center">
              <Chevron dir="up" />
            </div>
            <div className="mt-[33px] h-[223px] w-[15px] bg-[#cdcdcd]" />
            <div className="mt-auto flex h-[17px] items-center">
              <Chevron dir="down" />
            </div>
          </div>
        </div>
        <a className="mt-[10px] tracking-[-0.2px] text-[#0f5ba7] underline">Remove Properties and Personal Information</a>
      </div>

      <footer className="mt-[8px] flex justify-end gap-[8px] pr-[7px] text-center">
        <button className="h-[21px] w-[73px] border-2 border-[#0078d7] bg-[#e1e1e1] leading-[18px]">OK</button>
        <button className="h-[21px] w-[73px] border border-[#adadad] bg-[#e1e1e1] leading-[20px]">Cancel</button>
        <button className="h-[21px] w-[73px] border border-[#bfbfbf] bg-[#ccc] leading-[20px] text-[#838383]">Apply</button>
      </footer>
    </section>
  );
}

/* ---------- taskbar ---------- */

const Guitar = () => (
  <svg width="72" height="38" viewBox="0 0 72 38" fill="none">
    <path d="M2 4l6-3 5 3-1 5-6 1z" fill="#2c2522" />
    <path d="M10 6l29 13" stroke="#4a2c1d" strokeWidth="4" />
    <path d="M10 5l29 13" stroke="#b98a57" strokeWidth="1" />
    <path d="M27 18c1-8 9-10 15-9 5 1 6 3 11 3 7 0 9 6 7 12-3 8-12 14-19 12-5-1-5-5-8-8-3-2-7-4-6-10z" fill="#e3b82e" stroke="#6b4a1c" />
    <path d="M28 16c2-7 9-8 15-7 3 1 5 3 8 3L33 27c-3-2-6-6-5-11z" fill="#5f9a2f" />
    <path d="M60 20c-1 9-11 17-19 16-5-1-5-5-7-8 9 1 18-2 26-8z" fill="#d5392a" />
    <circle cx="42" cy="20" r="5" fill="#32211a" />
    <path d="M46 28l7-8" stroke="#3a2418" strokeWidth="2.500" />
    <path d="M6 28v-8l4-1M15 33v-7l7-1v7M66 24v-8l3 2" stroke="#333" strokeWidth="1.500" />
    <circle cx="5" cy="28" r="2" fill="#333" />
    <circle cx="13.500" cy="33" r="2" fill="#333" />
    <circle cx="20.500" cy="32" r="2" fill="#333" />
    <circle cx="64.500" cy="24" r="2" fill="#333" />
  </svg>
);

const taskItems = [
  { name: 'edge', tile: 'w-[48px]', line: 'w-[40px]', icon: <EdgeLogo size={25} /> },
  { name: 'explorer', tile: 'w-[48px] bg-[#33464f]', line: 'w-[48px]', icon: (
    <Svg size={24} box="0 0 24 24">
      <path d="M1 2h8l2 3h12v17H1z" fill="#f5b93a" />
      <path d="M1 7h22v14H1z" fill="#ffdc74" />
      <path d="M5 22v-8h14v8h-4v-4H9v4z" fill="#3b8bd0" />
    </Svg>
  ) },
  { name: 'firefox', tile: 'w-[50px]', line: 'w-0', icon: <FirefoxLogo size={24} /> },
  { name: 'notepad', tile: 'w-[48px]', line: 'w-[40px]', icon: (
    <Svg size={24} box="0 0 24 24">
      <path d="M8 2l14 2-4 18-16-2z" fill="#9bd6e2" />
      <path d="M8 2l14 2-1 3L7 5z" fill="#d8dcdd" />
      <path d="M2 20l4-9 14 4-2 7z" fill="#57aabc" />
    </Svg>
  ) },
  { name: 'rar', tile: 'w-[50px]', line: 'w-[40px]', icon: <Rar size={24} /> },
];

function Taskbar() {
  return (
    <footer className="absolute bottom-0 left-0 flex h-[40px] w-full bg-[linear-gradient(90deg,#03161f_0,#03161f_640px,#020d20_934px,#222_934px)] text-white">
      <div className="flex w-[48px] items-center justify-center">
        <Svg>
          <path d="M0 2.300L7 1.300v6.200H0zM8 1.200L16 0v7.500H8zM0 8.500h7v6.200l-7-1zM8 8.500h8V16l-8-1.200z" fill="#fff" />
        </Svg>
      </div>
      <div className="flex w-[288px] items-center border-b border-[#bbb] bg-[#f2f2f2] pl-[13px] text-[#333]">
        <Svg size={17} box="0 0 17 17">
          <circle cx="10" cy="6.500" r="5.300" stroke="#222" strokeWidth="1.300" />
          <path d="M6.300 10.500L1 16" stroke="#222" strokeWidth="1.500" />
        </Svg>
        <span className="mt-px ml-[9px] w-[175px] text-[14px] tracking-[0px] whitespace-nowrap">Type here to search</span>
        <Guitar />
      </div>
      <div className="flex w-[52px] items-center justify-center pr-[4px]">
        <Svg size={18} box="0 0 18 18">
          <path d="M1 1v3h10V1M1.500 6.500h9v6h-9zM1 17v-3h10v3M15 1v16M13 9h4" stroke="#eee" strokeWidth="1.200" />
        </Svg>
      </div>
      {taskItems.map((item) => (
        <div key={item.name} className={clsx('flex flex-col items-center', item.tile)}>
          <div className="flex h-[38px] items-center pt-px">{item.icon}</div>
          <div className={clsx('h-[2px] bg-[#76b9ed]', item.line)} />
        </div>
      ))}
      <div className="ml-auto flex items-center">
        <svg width="12" height="7" viewBox="0 0 12 7" fill="none" className="mr-[12px]">
          <path d="M1 6l5-5 5 5" stroke="#fff" strokeWidth="1.300" />
        </svg>
        <Svg className="mr-[8px]">
          <path d="M2.500 5.500h7v6h-7zM9.500 7.500l3-1.500v5l-3-1.500M3.500 2.500c2-1.500 6-1.500 8 0M3.500 14c2 1.500 6 1.500 8 0" stroke="#fff" />
        </Svg>
        <Svg className="mr-[8px]">
          <path d="M4.500 3.500h11v8h-11M10 12v2.500M6 14.500h8M.5 1.500h4v4h-4zM2.500 5.500v9h3" stroke="#fff" />
        </Svg>
        <Svg size={17} className="mr-[11px]">
          <path d="M1 6h2.500L7 3v10l-3.500-3H1zM9 6c1 1 1 3 0 4M11 4c2 2 2 6 0 8M13 2.500c3 3 3 8 0 11" stroke="#fff" />
        </Svg>
        <div className="w-[50px] text-center text-[12px] leading-[18px] tracking-[-0.5px] whitespace-nowrap">
          5:30 PM
          <br />
          2/6/2025
        </div>
        <Svg size={18} box="0 0 18 18" className="mr-[20px] ml-[18px]">
          <path d="M1.500 2.500h15v11h-5L9 16l-2.500-2.500h-5z" stroke="#fff" strokeWidth="1.200" />
        </Svg>
        <div className="mr-[3px] h-[40px] w-px bg-[#555]" />
      </div>
    </footer>
  );
}

/* ---------- watermark ---------- */

const Watermark = () => (
  <svg
    width="204"
    height="72"
    viewBox="0 0 204 72"
    fill="none"
    className="absolute top-[605px] left-[1033px] opacity-80 drop-shadow-[0_0_2px_rgba(90,90,90,0.5)]"
  >
    <g fill="#fff" fontFamily="'Liberation Sans', sans-serif" fontSize="50" fontWeight="700" letterSpacing="0">
      <text x="6" y="54" textLength="65" lengthAdjust="spacingAndGlyphs">ANY</text>
      <text x="136" y="54" textLength="64" lengthAdjust="spacingAndGlyphs">RUN</text>
    </g>
    <path d="M78 11v44M86 50V9l41 22M92 56V20M91 20l35 18-39 25" stroke="#fff" strokeWidth="5" strokeLinejoin="round" />
  </svg>
);

export default function App() {
  return (
    <main className="relative h-[720px] w-[1280px] overflow-hidden bg-[linear-gradient(92deg,#00aafe_0%,#00acff_22%,#0092f4_48%,#0068dc_70%,#0048cc_86%,#003cba_100%)] font-['Open_Sans','Noto_Sans',sans-serif] text-[11.5px] tracking-[-0.15px]">
      <Desktop />
      {/* Windows stacked behind the explorer */}
      <section className="absolute top-[128px] left-[466px] h-[480px] w-[814px] border-b border-[#888] bg-white">
        <div className="mt-[48px] h-[2px] bg-[#eee]" />
      </section>
      <ArchiveWindow />
      <ExplorerWindow />
      <PropertiesDialog />
      <Watermark />
      <Taskbar />
    </main>
  );
}
